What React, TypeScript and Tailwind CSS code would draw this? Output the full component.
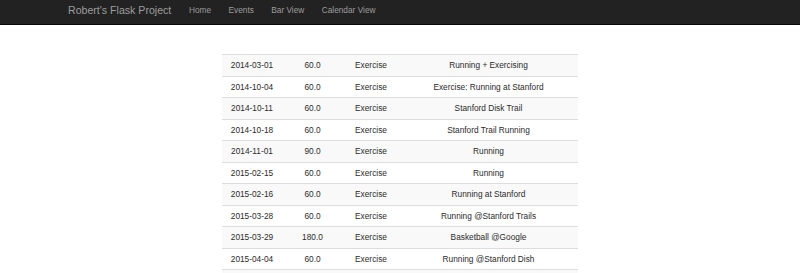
const events = [
  ["2014-03-01", "60.0", "Exercise", "Running + Exercising"],
  ["2014-10-04", "60.0", "Exercise", "Exercise: Running at Stanford"],
  ["2014-10-11", "60.0", "Exercise", "Stanford Disk Trail"],
  ["2014-10-18", "60.0", "Exercise", "Stanford Trail Running"],
  ["2014-11-01", "90.0", "Exercise", "Running"],
  ["2015-02-15", "60.0", "Exercise", "Running"],
  ["2015-02-16", "60.0", "Exercise", "Running at Stanford"],
  ["2015-03-28", "60.0", "Exercise", "Running @Stanford Trails"],
  ["2015-03-29", "180.0", "Exercise", "Basketball @Google"],
  ["2015-04-04", "60.0", "Exercise", "Running @Stanford Dish"],
];

export default function App() {
  return (
    <div className="h-[273px] bg-white font-['Liberation_Sans',Arial,sans-serif] overflow-hidden">
      <nav className="h-[25px] bg-[#222222] border-b border-[#080808] flex items-center pl-[68px] pb-[3px]">
        <span className="text-[10.6px] text-[#9d9d9d] mr-[9px]">Robert's Flask Project</span>
        <div className="flex text-[8.3px] text-[#9d9d9d]">
          <a className="px-[8.7px]">Home</a>
          <a className="px-[8.7px]">Events</a>
          <a className="px-[8.7px]">Bar View</a>
          <a className="px-[8.7px]">Calendar View</a>
        </div>
      </nav>

      <div className="mx-auto mt-[29px] w-[356px] text-[8.3px] text-[#2b2b2b]">
        {events.map((row, i) => (
          <div
            key={row[0]}
            className={`grid grid-cols-[60px_61px_56px_179px] h-[21.5px] items-center border-t border-[#dddddd] ${
              i % 2 === 0 ? "bg-[#f9f9f9]" : "bg-white"
            }`}
          >
            <span className="text-center">{row[0]}</span>
            <span className="text-center">{row[1]}</span>
            <span className="text-center">{row[2]}</span>
            <span className="text-center">{row[3]}</span>
          </div>
        ))}
        {/* next striped row, cut off by the window */}
        <div className="h-[21.5px] border-t border-[#dddddd] bg-[#f9f9f9]" />
      </div>
    </div>
  );
}
